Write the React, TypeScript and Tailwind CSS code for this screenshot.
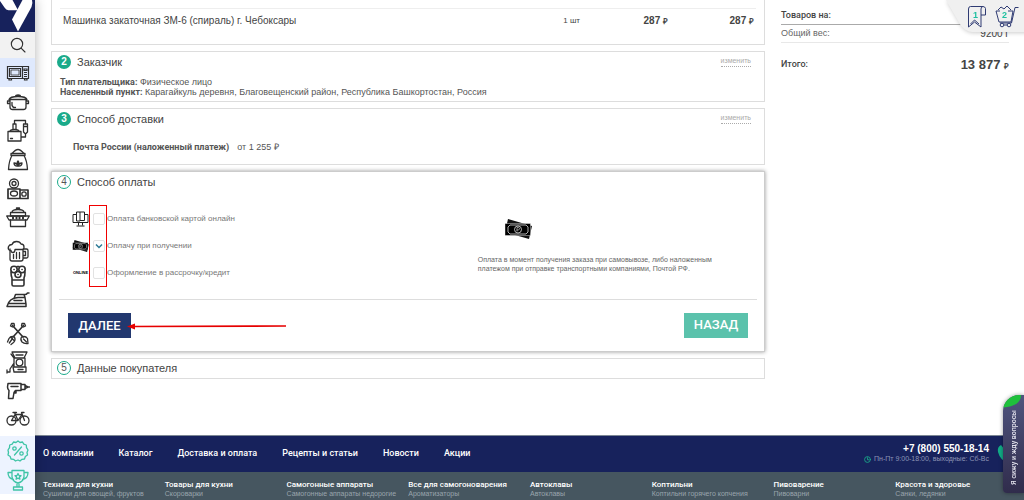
import { useState, type ReactNode } from "react";

function Icon({ children, className = "size-6" }: { children: ReactNode; className?: string }) {
  return (
    <svg
      viewBox="0 0 24 24"
      className={className}
      fill="none"
      stroke="currentColor"
      strokeWidth="1.3"
      strokeLinejoin="round"
      strokeLinecap="round"
      aria-hidden="true"
    >
      {children}
    </svg>
  );
}

const kitchen = [
  {
    label: "Посуда",
    icon: (
      <>
        <path d="M4 9.500h16V17q0 2.500-2.500 2.500h-11Q4 19.500 4 17zM3 9.500q1-3 9-3t9 3zM9.500 6.500q0-1.500 2.500-1.500t2.500 1.500M4 11H1.500v2.500H4M20 11h2.500v2.500H20" />
        <path d="M6 12.500v3l1.500 2h2" />
      </>
    ),
  },
  {
    label: "Самогонные аппараты",
    icon: (
      <>
        <path d="M2 12.500h13V22H2zM4 12.500q0-2 4.500-2t4.500 2M7 5h3v5.500H7zM8.500 5V1.500h11V5M17.500 5h4v8l-2 2-2-2zM19.500 15v3H15M17.500 7.500h4" />
        <path d="M4.500 19.500h2" />
      </>
    ),
  },
  {
    label: "Мешки и крупы",
    icon: (
      <>
        <path d="M6 7.500q-3 5-3.500 14h19q-.5-9-3.500-14zM5 5.500h14v2H5zM6 5.500q3.500-4 6-4t6 4" />
        <path d="M12 18v-5q-1.500 1.500 0 4 1.500-2.500 0-4M12 18q-4 .5-4-3 3 0 4 3zM12 18q4 .5 4-3-3 0-4 3z" />
      </>
    ),
  },
  {
    label: "Консервирование",
    icon: (
      <>
        <path d="M2 12h12v9.500H2zM14 13h8v8.500h-8z" strokeWidth="1.700" />
        <circle cx="8" cy="6.500" r="4.500" />
        <circle cx="8" cy="6.500" r="2" />
        <ellipse cx="8" cy="16.500" rx="3.500" ry="2.500" />
        <circle cx="18" cy="17" r="2.200" />
      </>
    ),
  },
  {
    label: "Автоклавы",
    icon: (
      <>
        <path d="M4.500 6.500h15V10h-15zM4.500 14v6.500h15V14M6 6.500q0-3 6-3t6 3M10.500 3.500V2h3v1.500" />
        <path d="M.700 10h22.600L21 14H3z" />
        <path d="M7 11.500v1M10.500 11.500v1M13.500 11.500v1M17 11.500v1" strokeWidth="2" />
      </>
    ),
  },
];

const home = [
  {
    label: "Пивоварение",
    icon: (
      <>
        <path d="M4 9v10q0 2 2 2h9q2 0 2-2V9M17 9h3.500Q22 9 22 10.500v6q0 1.500-1.500 1.500H17M17 11.500h2.500v4H17" />
        <path d="M4 10.500q-2.500-1-1.500-4Q3.500 4.500 6 4.500q1-3 4.500-3T15 4q3 0 3 3T16 9.500H9q0 3-2 3t-2-2M7.500 14.500v4M10.500 12.500v6M13.500 12.500v6" />
      </>
    ),
  },
  {
    label: "Бритвы",
    icon: (
      <g strokeWidth="1.600">
        <circle cx="8" cy="5.500" r="3.200" />
        <circle cx="16" cy="5.500" r="3.200" />
        <circle cx="12" cy="10.500" r="3" />
        <path d="M5 8q0 4 1 6v6.500Q6 22 7.500 22h9q1.500 0 1.500-1.500V14q1-2 1-6M6 16h12M11 2.500h2M8 5.500h.1M16 5.500h.1M12 10.500h.1" />
      </g>
    ),
  },
  {
    label: "Утюги",
    icon: (
      <g strokeWidth="1.500">
        <path d="M1 18.500h19V16l-1-6.500h-7Q3 10 1 18.500zM3 15.500h16.500M8 12.500h8M8 10.500l1.500-4H19q1.500 0 2.500-1.500h1.500M18 6.500l1 3" />
      </g>
    ),
  },
];

const leisure = [
  {
    label: "Дача и сад",
    icon: (
      <>
        <path d="M6.500 3.500 17 15M17.500 3.500 7 15" strokeWidth="1.700" />
        <path d="M4.500 4l1-2.500H8L8.500 4 6.500 5zM19.500 4l-1-2.500H16L15.500 4l2 1z" />
        <path d="M8.500 15q-3.500-1.500-5.500 1.500L1.500 20M8.500 15q1.500 3-1 5.500L5 22.500M6.500 16.500 3.300 21M5 15.500l3.500 3.500" />
        <path d="M15.500 15q4-1.500 6 1.500l.5 5q-4 .5-6-1.500-2-2.500-.5-5zM17.500 17l3 3" />
      </>
    ),
  },
  {
    label: "Мясорубки",
    icon: (
      <>
        <path d="M6 2h15l-3 6H9zM8 8h11v9H8zM7 17h13v5H8zM5 4l3 4M8 13l-4 6v3H1M1 20v3" />
        <circle cx="13.500" cy="12.500" r="3.300" />
        <path d="M10 5h7M12 19.500h5" />
      </>
    ),
  },
  {
    label: "Инструменты",
    icon: (
      <g strokeWidth="1.500">
        <path d="M2 5.500h13v7H9.500l-1.500 2-1 6H2.500l.5-8Q1.500 11 1.500 9zM15 6.500h4v5h-4M19 7.500l3 1.500-3 1.500M22 9h1.500M10 12.500V15H8M5 8.500h7" />
      </g>
    ),
  },
  {
    label: "Велосипеды",
    icon: (
      <>
        <circle cx="5.500" cy="14.500" r="4.500" />
        <circle cx="18.500" cy="14.500" r="4.500" />
        <path d="m5.500 14.500 3.500-6h7l-4 6zM18.500 14.500 15.500 6.500H18M12 14.500 8.500 6.500M7 6.500h3.500" />
      </>
    ),
  },
];

const promo = [
  {
    label: "Скидки",
    icon: (
      <>
        <path d="M12 2l2 1.500L16.500 3l1.300 2.200 2.500.8.2 2.600L22 11l-1 2.500.5 2.500-2.200 1.500-.8 2.500-2.500.3L14 22l-2-1-2.500 1-2-1.700-2.500-.3-.8-2.500L2 16l.5-2.500L2 11l1.500-2.400.2-2.600 2.500-.8L7.500 3l2.500.5z" />
        <path d="m8.500 16 7-8" />
        <circle cx="8.500" cy="9.500" r="1.700" />
        <circle cx="15.500" cy="14.500" r="1.700" />
      </>
    ),
  },
  {
    label: "Акции",
    icon: (
      <>
        <path d="M6 2.500h12V9q-1 5-6 6-5-1-6-6zM6 4.500H2q0 6 5.500 7M18 4.500h4q0 6-5.500 7M11 15v4M13 15v4M7.500 19h9v3h-9z" />
        <path d="m12 5.500 1 2 2 .2-1.500 1.400.4 2.100-1.900-1-1.900 1 .4-2.100L9 7.700l2-.2z" />
      </>
    ),
  },
];

type MenuItem = { label: string; icon: ReactNode };

function MenuGroup({ items, row, className = "" }: { items: MenuItem[]; row: string; className?: string }) {
  return (
    <nav className={`flex flex-col ${className}`}>
      {items.map((item) => (
        <a key={item.label} href="#" aria-label={item.label} className={`flex items-center justify-center ${row}`}>
          <Icon className="size-6">{item.icon}</Icon>
        </a>
      ))}
    </nav>
  );
}

function Sidebar() {
  return (
    <aside className="fixed inset-y-0 left-0 z-10 w-[35px] bg-white text-[#303030] shadow-[0_0_12px_rgba(0,0,0,0.3)]">
      <a href="#" aria-label="На главную" className="block h-8 bg-[#17225c]">
        <svg viewBox="0 0 35 32" className="h-8 w-full" fill="#fff" aria-hidden="true">
          <path d="M0 0h12.500L18 10.300H8.500Q6 10 4.500 7.500L0 1z" />
          <path d="M22.500 0H32q1 3-.5 7L18 31.500l-6-12z" />
        </svg>
      </a>
      <button type="button" aria-label="Поиск" className="flex h-[26px] w-full items-center justify-center bg-[#f2f2f2]">
        <Icon className="size-4">
          <circle cx="10.500" cy="10.500" r="8.500" strokeWidth="1.700" />
          <path d="m17 17 5.500 5.500" strokeWidth="1.700" />
        </Icon>
      </button>
      <a href="#" aria-label="Бытовая техника" className="flex h-[29px] items-center justify-center bg-[#dfe9fd]">
        <svg viewBox="0 0 24 16" className="h-4 w-6" fill="none" stroke="currentColor" strokeWidth="1.200" aria-hidden="true">
          <path d="M1.500 1.500h21v12h-21zM16.500 1.500v12M3.500 3.500h11v8h-11zM3 13.500V15h2.500v-1.500M18.500 13.500V15H21v-1.500" />
          <path d="M5 5h8v5H5z" strokeWidth=".8" />
          <path d="M18 4h3v1.500h-3zM18 7.500h3M18 9.500h3M18 11.500h3" />
        </svg>
      </a>
      <MenuGroup items={kitchen} row="h-[29px]" />
      <MenuGroup items={home} row="h-6" className="mt-2" />
      <MenuGroup items={leisure} row="h-7" className="mt-2" />
      <MenuGroup items={promo} row="h-[29px]" className="mt-1 bg-[#edf3ff] text-[#3fc4a6]" />
    </aside>
  );
}

function Banknotes({ className }: { className: string }) {
  return (
    <svg viewBox="0 0 28 20" className={className} aria-hidden="true">
      <path d="M4 0 28 7l-3 13L1 13z" fill="#111" />
      <path d="M1 4.500h25.500v12H1z" fill="#000" stroke="#fff" strokeWidth=".4" />
      <path d="M6 6h16l2 2v5l-2 2H6l-2-2V8z" fill="none" stroke="#ddd" strokeWidth=".8" />
      <circle cx="14" cy="10.500" r="3.500" fill="none" stroke="#ddd" strokeWidth=".8" />
      <path d="M13 12.500v-4h1.200q1.300 0 1.300 1.200T14.200 11H12.500" fill="none" stroke="#ddd" strokeWidth=".6" />
    </svg>
  );
}

function Step({ n, title, done, editable }: { n: number; title: string; done?: boolean; editable?: boolean }) {
  return (
    <div className="flex items-center">
      <span
        className={`flex size-[14px] items-center justify-center rounded-full text-[10px] leading-none ${
          done ? "bg-[#1aaa8a] font-bold text-white" : "border border-[#1aaa8a] text-[#555]"
        }`}
      >
        {n}
      </span>
      <h2 className="ml-[6px] text-[11px] leading-[14px] text-[#444]">{title}</h2>
      {editable && (
        <a href="#" className="ml-auto border-b border-dotted border-[#aaa] text-[7px] leading-[10px] text-[#aaa]">
          изменить
        </a>
      )}
    </div>
  );
}

const payments = [
  {
    id: "card",
    label: "Оплата банковской картой онлайн",
    icon: (
      <svg viewBox="0 0 17 16" className="h-4 w-[17px]" fill="none" stroke="#222" aria-hidden="true">
        <path d="M4 3.500H1v8h15v-8h-3M6.500 12v2.500M10.500 12v2.500M4.500 15h8M4.500 1H8v9H4.500zM8 1h4.500v8.500H8" />
      </svg>
    ),
  },
  { id: "cash", label: "Оплачу при получении", icon: <Banknotes className="h-3 w-[17px]" /> },
  {
    id: "credit",
    label: "Оформление в рассрочку/кредит",
    icon: <span className="text-[4px] leading-none font-black text-black">ONLINE</span>,
  },
];

function Payment() {
  const [method, setMethod] = useState("cash");

  return (
    <section className="border border-[#ccc] bg-white px-[5px] pt-[3px] pb-[13px] shadow-[0_0_4px_rgba(0,0,0,0.4)]">
      <Step n={4} title="Способ оплаты" />
      <div className="grid grid-cols-[3fr_2fr] px-[2px] pt-[17px] pb-3">
        <div className="relative pl-[13px]">
          {payments.map((p) => (
            <div key={p.id} className="flex h-[27px] items-center">
              <span className="flex w-[17px] justify-center">{p.icon}</span>
              <span className="relative ml-1 flex">
                <input
                  id={p.id}
                  type="checkbox"
                  checked={method === p.id}
                  onChange={() => setMethod(p.id)}
                  className="peer size-3 appearance-none rounded-xs border border-[#e2e2e2] bg-white"
                />
                <svg
                  viewBox="0 0 12 12"
                  className="pointer-events-none absolute inset-0 hidden size-3 peer-checked:block"
                  fill="none"
                  stroke="#2c7a96"
                  strokeWidth="1.500"
                  aria-hidden="true"
                >
                  <path d="m3 4.500 3 3 3-3" />
                </svg>
              </span>
              <label htmlFor={p.id} className="ml-[2px] text-[8px] text-[#777]">
                {p.label}
              </label>
            </div>
          ))}
          <span className="pointer-events-none absolute top-0 left-[31px] h-20 w-4 outline outline-[#f00000]" />
        </div>
        <div className="pt-[13px]">
          <Banknotes className="ml-[26px] h-5 w-7" />
          <p className="mt-4 max-w-[240px] text-[7px] leading-[9px] text-[#666]">
            Оплата в момент получения заказа при самовывозе, либо наложенным платежом при отправке транспортными
            компаниями, Почтой РФ.
          </p>
        </div>
      </div>
      <div className="mx-[2px] flex justify-between border-t border-[#ddd] px-[9px] pt-[13px]">
        <div className="relative">
          <button type="button" className="h-[25px] w-[63px] bg-[#22386f] font-['Roboto'] text-[13px] font-medium text-white">
            ДАЛЕЕ
          </button>
          <svg viewBox="0 0 160 8" className="absolute top-[9px] left-[59px] h-2 w-40" aria-hidden="true">
            <path d="M4 4.500 159 4" stroke="#e60000" strokeWidth="1.600" />
            <path d="m0 4.500 8-3v6z" fill="#e60000" />
          </svg>
        </div>
        <button type="button" className="h-[25px] w-16 bg-[#5bc2ac] font-['Roboto'] text-[13px] font-medium text-white">
          НАЗАД
        </button>
      </div>
    </section>
  );
}

function Summary() {
  return (
    <aside className="w-[228px] pt-[10px] text-[9px] text-[#444]">
      <dl>
        <div className="flex h-[15px] border-b border-[#aaa]">
          <dt className="font-['Roboto'] leading-[10px] font-medium">Товаров на:</dt>
        </div>
        <div className="flex h-[18px] items-center justify-between border-b border-[#e8e8e8]">
          <dt className="text-[#666]">Общий вес:</dt>
          <dd className="text-[10px]">9200 г</dd>
        </div>
        <div className="mt-[13px] flex h-[18px] items-center justify-between">
          <dt className="font-['Roboto'] font-medium">Итого:</dt>
          <dd className="text-[13px] font-bold">
            13 877 <span className="text-[8px]">₽</span>
          </dd>
        </div>
      </dl>
    </aside>
  );
}

function Basket() {
  return (
    <div className="fixed top-0 right-0 z-10 flex h-8 w-[78px] items-start overflow-visible pt-[5px] pl-[21px] text-[#2f3b73]">
      <span className="absolute inset-y-0 right-[-30px] left-0 origin-top-left skew-x-30 rounded-bl-lg bg-[#f0f0f0] shadow-[0_1px_4px_rgba(0,0,0,0.2)]" />
      <a href="#" aria-label="Избранное" className="relative flex h-6 w-5 text-[9px]">
        <svg viewBox="0 0 20 24" className="absolute inset-0 h-6 w-5" fill="none" stroke="currentColor" aria-hidden="true">
          <path d="M16 1.500H3.500Q1.500 1.500 1.500 4v18l6-5 6.500 5V4q0-2.500 2-2.500t2.500 2V10H14M3.500 19l4-4 4.500 4" />
        </svg>
        <span className="relative ml-[6px] pt-[5px] leading-[10px] font-bold text-[#1fc0a0]">1</span>
      </a>
      <a href="#" aria-label="Корзина" className="relative ml-2 flex h-6 w-6 text-[9px]">
        <svg viewBox="0 0 24 24" className="absolute inset-0 size-6" fill="none" stroke="currentColor" aria-hidden="true">
          <path d="M1 6h4M13 6h5l-2 11H4L1 6M23.500 2.500H20L16.500 18H5M3 5l3-3 3 2 3-3 4 4" />
          <circle cx="7" cy="20" r="1.800" />
          <circle cx="14" cy="20" r="1.800" />
          <path d="M9 20h3" />
        </svg>
        <span className="relative ml-[7px] pt-[5px] leading-[10px] font-bold text-[#1fc0a0]">2</span>
      </a>
    </div>
  );
}

function ChatTab() {
  return (
    <button
      type="button"
      className="fixed right-0 bottom-[7px] z-10 flex h-[98px] w-[21px] items-end justify-center overflow-hidden rounded-tl-2xl rounded-bl-sm bg-linear-to-b from-[#50557e] to-[#302c4c] pb-2 shadow-[0_0_4px_rgba(0,0,0,0.4)]"
    >
      <svg viewBox="0 0 21 13" className="absolute top-0 left-0 h-[13px] w-[21px]" aria-hidden="true">
        <path d="M0 12.500Q1 1 12 0h6q0 11-18 12.500z" fill="#1fc13c" />
      </svg>
      <span className="rotate-180 font-['Roboto'] text-[7px] leading-[10px] font-medium whitespace-nowrap text-[#e4e4ee] [writing-mode:vertical-rl]">
        Я сижу и жду вопросы
      </span>
    </button>
  );
}

const pages = ["О компании", "Каталог", "Доставка и оплата", "Рецепты и статьи", "Новости", "Акции"];

const categories = [
  ["Техника для кухни", "Сушилки для овощей, фруктов"],
  ["Товары для кухни", "Скороварки"],
  ["Самогонные аппараты", "Самогонные аппараты недорогие"],
  ["Все для самогоноварения", "Ароматизаторы"],
  ["Автоклавы", "Автоклавы"],
  ["Коптильни", "Коптильни горячего копчения"],
  ["Пивоварение", "Пивоварни"],
  ["Красота и здоровье", "Санки, ледянки"],
];

function Footer() {
  return (
    <footer className="mt-14 border-t border-[#7c8794] bg-[#465660] text-white">
      <div className="flex h-9 items-center justify-between bg-[#17225c] pr-[7px] pl-2">
        <nav className="flex gap-[25px] font-['Roboto'] text-[9px] font-medium">
          {pages.map((page) => (
            <a key={page} href="#">
              {page}
            </a>
          ))}
        </nav>
        <div className="flex items-center gap-2">
          <div className="text-right">
            <a href="tel:+78005501814" className="block text-[10px] leading-[11px] font-bold">
              +7 (800) 550-18-14
            </a>
            <p className="flex items-center justify-end gap-[3px] text-[7px] leading-[10px] text-[#8d94b5]">
              <Icon className="size-[7px] text-[#1aaa8a]">
                <circle cx="12" cy="12" r="10" strokeWidth="3" />
                <path d="M12 6v7h5" strokeWidth="3" />
              </Icon>
              Пн-Пт 9:00-18:00, выходные: Сб-Вс
            </p>
          </div>
          <svg viewBox="0 0 20 20" className="size-5" fill="#12ad87" aria-hidden="true">
            <path d="M4 1Q0 3 1 8q2 8 10 11 5 1 7-3l-4-4-3 2q-4-2-5-6l2-2z" />
          </svg>
        </div>
      </div>
      <div className="grid grid-cols-8 pt-2 pr-[7px] pb-2 pl-2 leading-[9px] whitespace-nowrap">
        {categories.map(([title, item]) => (
          <div key={title}>
            <a href="#" className="block font-['Roboto'] text-[8px] font-medium">
              {title}
            </a>
            <a href="#" className="block text-[7px] text-[#9aa5ad]">
              {item}
            </a>
          </div>
        ))}
      </div>
    </footer>
  );
}

export default function App() {
  return (
    <div className="min-h-screen bg-white pl-[35px] font-['Liberation_Sans',Arial,sans-serif]">
      <Sidebar />
      <Basket />
      <ChatTab />
      <main className="flex gap-4 pr-[15px] pl-4">
        <div className="flex flex-1 flex-col gap-[6px]">
          <section className="border border-t-0 border-[#ddd] px-2 pt-2 pb-[11px]">
            <table className="w-full border-t border-[#eee] text-[#444]">
              <tbody>
                <tr className="h-6 text-[10px]">
                  <td className="pl-[3px]">Машинка закаточная ЗМ-6 (спираль) г. Чебоксары</td>
                  <td className="w-[60px] text-right text-[8px]">1 шт</td>
                  <td className="w-[88px] text-right font-bold">
                    287 <span className="text-[8px]">₽</span>
                  </td>
                  <td className="w-[88px] pr-[2px] text-right font-bold">
                    287 <span className="text-[8px]">₽</span>
                  </td>
                </tr>
              </tbody>
            </table>
          </section>
          <section className="border border-[#ddd] pt-[3px] pr-[13px] pb-1 pl-[5px]">
            <Step n={2} title="Заказчик" done editable />
            <div className="mt-2 pl-[3px] text-[9px] leading-[10px] text-[#555]">
              <p>
                <b className="font-['Roboto']">Тип плательщика:</b> Физическое лицо
              </p>
              <p>
                <b className="font-['Roboto']">Населенный пункт:</b> Карагайкуль деревня, Благовещенский район,
                Республика Башкортостан, Россия
              </p>
            </div>
          </section>
          <section className="border border-[#ddd] pt-[3px] pr-[13px] pb-3 pl-[5px]">
            <Step n={3} title="Способ доставки" done editable />
            <p className="mt-4 pl-4 text-[9px] leading-[10px] text-[#555]">
              <b className="font-['Roboto']">Почта России (наложенный платеж)</b>
              <span className="ml-2">от 1 255 ₽</span>
            </p>
          </section>
          <Payment />
          <section className="border border-[#ddd] pt-[2px] pb-[3px] pl-[5px]">
            <Step n={5} title="Данные покупателя" />
          </section>
        </div>
        <Summary />
      </main>
      <Footer />
    </div>
  );
}
